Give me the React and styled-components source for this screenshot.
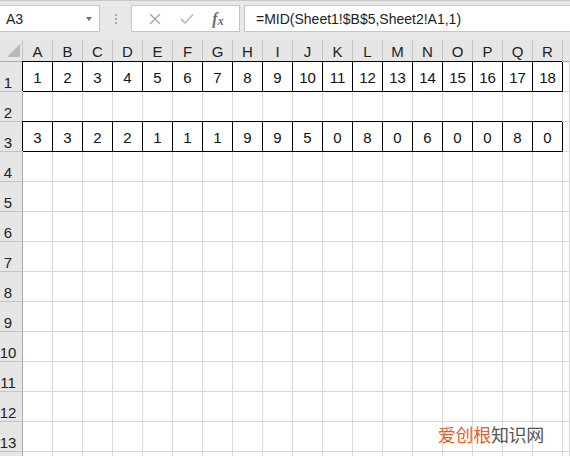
import React from 'react';
import styled, { createGlobalStyle } from 'styled-components';

const COLS = ['A', 'B', 'C', 'D', 'E', 'F', 'G', 'H', 'I', 'J', 'K', 'L', 'M', 'N', 'O', 'P', 'Q', 'R'];
const ROW1 = COLS.map((c, i) => i + 1);
const ROW3 = [3, 3, 2, 2, 1, 1, 1, 9, 9, 5, 0, 8, 0, 6, 0, 0, 8, 0];
const ROWS = [ROW1, null, ROW3, null, null, null, null, null, null, null, null, null, null];

const GlobalStyle = createGlobalStyle`
  body {
    margin: 0;
    background: #fff;
    font-family: "Liberation Sans", Arial, sans-serif;
  }
`;

const App = () => {
  return (
    <Window>
      <GlobalStyle />
      <TopBar>
        <NameBox>
          A3
          <Caret />
        </NameBox>
        <Grip>
          <i />
          <i />
          <i />
        </Grip>
        <ActionBox>
          <ActionIcon>
            <svg width="12" height="12" viewBox="0 0 12 12">
              <path d="M1 1 L11 11 M11 1 L1 11" stroke="#a6a6a6" strokeWidth="1.4" fill="none" />
            </svg>
          </ActionIcon>
          <ActionIcon>
            <svg width="14" height="12" viewBox="0 0 14 12">
              <path d="M1 6 L5 10 L13 1.5" stroke="#bdbdbd" strokeWidth="1.8" fill="none" />
            </svg>
          </ActionIcon>
          <Fx>
            f<sub>x</sub>
          </Fx>
        </ActionBox>
        <FormulaBox>=MID(Sheet1!$B$5,Sheet2!A1,1)</FormulaBox>
      </TopBar>

      <Sheet>
        <Corner>
          <svg width="13" height="13" viewBox="0 0 13 13">
            <polygon points="13,0 13,13 0,13" fill="#b9b9b9" />
          </svg>
        </Corner>
        {COLS.map((c) => (
          <ColHead key={c}>{c}</ColHead>
        ))}
        <ColHead $blank />

        {ROWS.map((row, r) => (
          <React.Fragment key={r}>
            <RowHead>{r + 1}</RowHead>
            {COLS.map((c, i) => (
              <Cell key={c} $boxed={!!row}>
                {row ? row[i] : ''}
              </Cell>
            ))}
            <Cell />
          </React.Fragment>
        ))}
        {/* row 14 only peeks in at the bottom edge */}
        <RowHead />
        {COLS.map((c) => (
          <Cell key={c} />
        ))}
        <Cell />
      </Sheet>

      <Watermark>
        <span>爱创根</span>知识网
      </Watermark>
    </Window>
  );
};

const Window = styled.div`
  position: relative;
  width: 570px;
  height: 456px;
  overflow: hidden;
  display: flex;
  flex-direction: column;
`;

const TopBar = styled.div`
  height: 40px;
  box-sizing: border-box;
  flex-shrink: 0;
  display: flex;
  align-items: flex-start;
  padding-top: 5px;
  background: #e8e8e8;
  border-top: 1px solid #c8c8c8;
`;

const NameBox = styled.div`
  position: relative;
  width: 100px;
  height: 27px;
  box-sizing: border-box;
  margin-top: -1px;
  padding-left: 6px;
  display: flex;
  align-items: center;
  background: #fff;
  border: 1px solid #c6c6c6;
  border-left: none;
  font-size: 14px;
  color: #222;
`;

const Caret = styled.span`
  position: absolute;
  right: 7px;
  top: 11px;
  width: 0;
  height: 0;
  border-left: 3.5px solid transparent;
  border-right: 3.5px solid transparent;
  border-top: 4px solid #707070;
`;

const Grip = styled.div`
  width: 31px;
  height: 26px;
  display: flex;
  flex-direction: column;
  align-items: center;
  justify-content: center;
  gap: 2px;

  i {
    width: 2px;
    height: 2px;
    background: #a8a8a8;
  }
`;

const ActionBox = styled.div`
  width: 109px;
  height: 27px;
  box-sizing: border-box;
  margin-top: -1px;
  display: flex;
  align-items: center;
  justify-content: space-around;
  padding: 0 6px 0 8px;
  background: #fff;
  border: 1px solid #c6c6c6;
`;

const ActionIcon = styled.span`
  display: flex;
  align-items: center;
`;

const Fx = styled.span`
  font-family: "Liberation Serif", "Times New Roman", serif;
  font-style: italic;
  font-weight: bold;
  font-size: 16px;
  color: #6e6e6e;
  line-height: 1;

  sub {
    font-size: 12px;
    vertical-align: baseline;
    position: relative;
    top: 1px;
  }
`;

const FormulaBox = styled.div`
  flex: 1;
  height: 27px;
  box-sizing: border-box;
  margin-top: -1px;
  margin-left: 4px;
  padding-left: 11px;
  display: flex;
  align-items: center;
  background: #fff;
  border: 1px solid #c6c6c6;
  border-right: none;
  font-size: 14px;
  color: #222;
`;

const Sheet = styled.div`
  flex: 1;
  display: grid;
  grid-template-columns: 23px repeat(18, 30px) 1fr;
  grid-template-rows: 22px repeat(14, 30px);
  overflow: hidden;
  background: #fff;
`;

const Corner = styled.div`
  box-sizing: border-box;
  background: #e6e6e6;
  border-right: 1px solid #c4c4c4;
  border-bottom: 1px solid #ababab;
  display: flex;
  align-items: flex-end;
  justify-content: flex-end;
  padding: 0 2px 4px 0;
`;

const ColHead = styled.div`
  box-sizing: border-box;
  background: #e6e6e6;
  border-right: 1px solid ${(p) => (p.$blank ? 'transparent' : '#c4c4c4')};
  border-bottom: 1px solid #ababab;
  display: flex;
  align-items: flex-end;
  justify-content: center;
  padding-bottom: 1px;
  font-size: 15px;
  line-height: 17px;
  color: #222;
`;

const RowHead = styled.div`
  box-sizing: border-box;
  background: #e6e6e6;
  border-right: 1px solid #ababab;
  border-bottom: 1px solid #c4c4c4;
  display: flex;
  align-items: flex-end;
  justify-content: center;
  padding: 0 6px 0 0;
  font-size: 15px;
  line-height: 17px;
  color: #222;
  white-space: nowrap;
`;

const Cell = styled.div`
  box-sizing: border-box;
  border-right: 1px solid ${(p) => (p.$boxed ? '#000' : '#d9d9d9')};
  border-bottom: 1px solid ${(p) => (p.$boxed ? '#000' : '#d9d9d9')};
  box-shadow: ${(p) => (p.$boxed ? '-1px -1px 0 0 #000' : 'none')};
  background: #fff;
  display: flex;
  align-items: center;
  justify-content: center;
  padding-top: 1px;
  font-size: 15px;
  color: #111;
`;

const Watermark = styled.div`
  position: absolute;
  right: 26px;
  bottom: 11px;
  font-family: "Noto Sans CJK SC", sans-serif;
  font-size: 18px;
  line-height: 22px;
  letter-spacing: -0.3px;
  color: #555;

  span {
    color: #e2632b;
  }
`;

export default App;
